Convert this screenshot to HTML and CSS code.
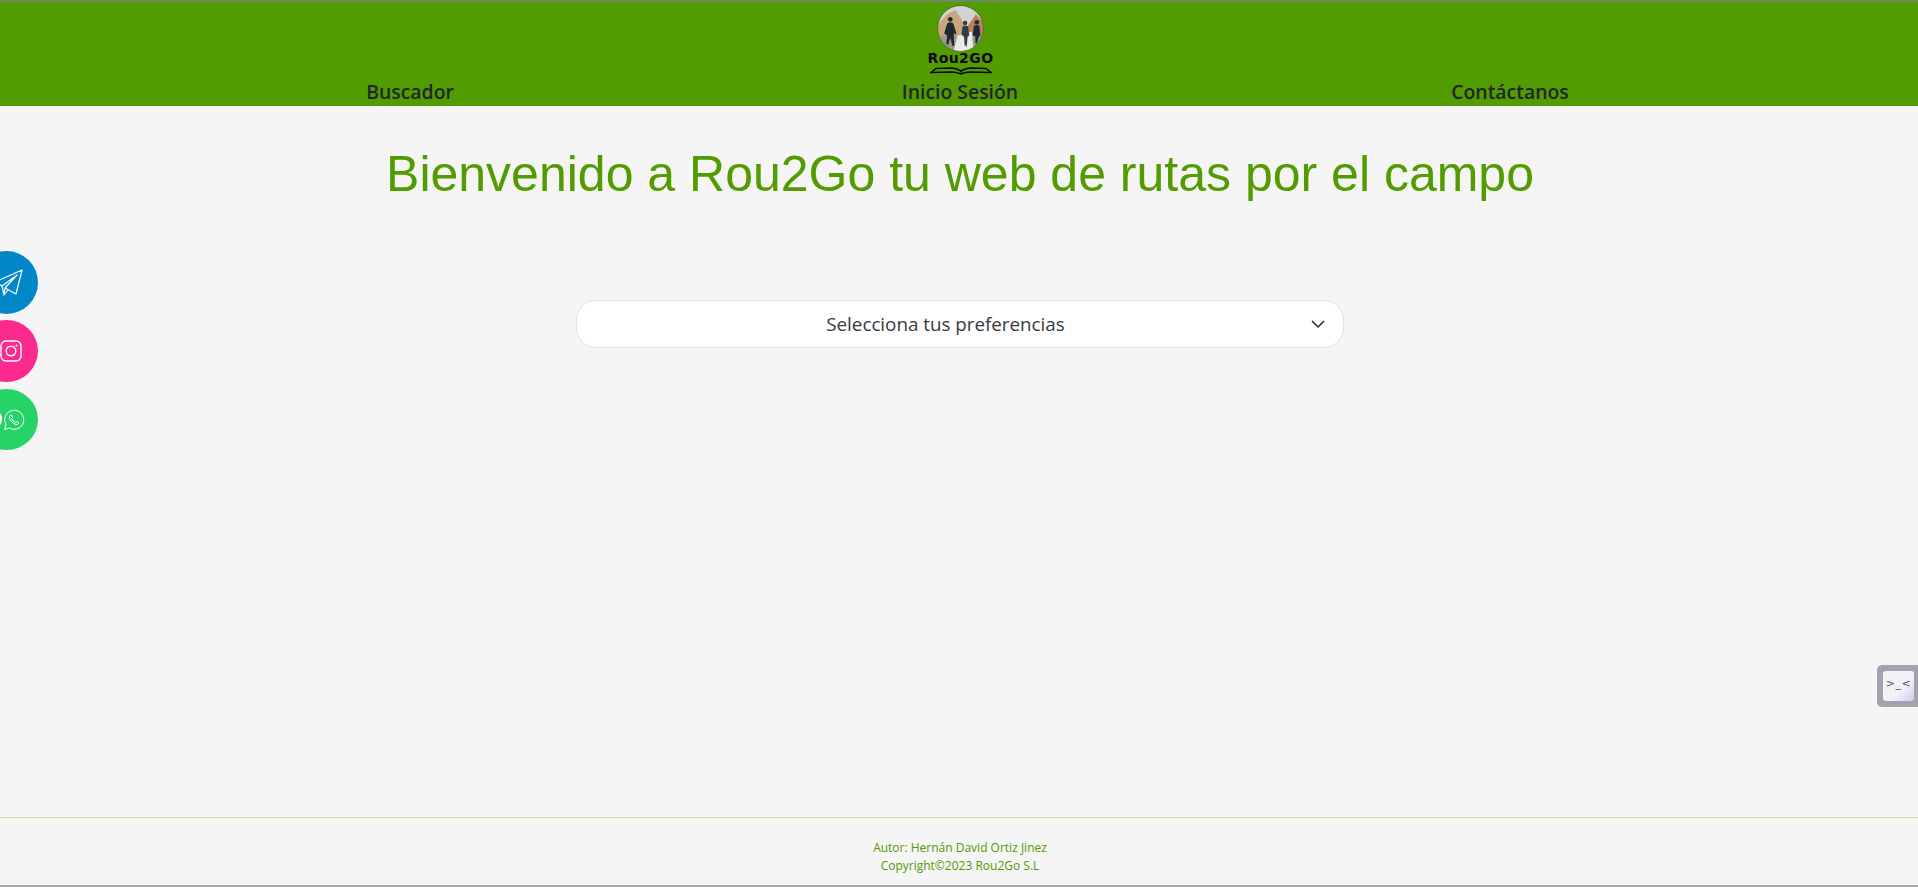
FILE: index.html
```html
<!DOCTYPE html>
<html lang="es">
<head>
    <meta charset="UTF-8">
    <meta name="viewport" content="width=device-width, initial-scale=1.0">
    <title>Rou2Go</title>
    <link rel="stylesheet" href="styles.css">
</head>
<body>
    <header class="cabecera">
        <div class="logo">
            <svg class="logo-foto" viewBox="0 0 46 46" width="47" height="47">
                <defs>
                    <clipPath id="recorte"><circle cx="23" cy="23" r="22.5"/></clipPath>
                </defs>
                <g clip-path="url(#recorte)">
                    <rect width="46" height="46" fill="#cfd3d2"/>
                    <path d="M0 20 L10 9 L18 5 L24 14 L28 22 V34 H0 Z" fill="#c8a67c"/>
                    <path d="M29 22 L38 9 L46 18 V34 H29 Z" fill="#bb7f60"/>
                    <path d="M0 30 H46 V46 H0 Z" fill="#9a9a8e"/>
                    <path d="M16 46 L20 30 L34 26 L36 46 Z" fill="#e9ebe9"/>
                    <circle cx="13" cy="14" r="2.3" fill="#20292d"/>
                    <path d="M10 18 Q13 16 16 18 L19 28 L17.5 29 L16.5 27 L16.5 33 L17 40 L15 40 L13 32 L11 39 L9 38 L10 30 L7 28 Z" fill="#20292d"/>
                    <circle cx="27.5" cy="17.5" r="2.2" fill="#2c4048"/>
                    <path d="M25 21 Q28 19 30.5 21 L31.5 30 L30 31 L29 41 L27 39 L26.5 31 L24 29 Z" fill="#2c4048"/>
                    <circle cx="39" cy="17" r="2.2" fill="#1d2a2f"/>
                    <path d="M36 20.5 Q39 18.5 41.5 20.5 L42.5 30 L41 31 L39 38 L37.5 37 L37.5 31 L35 29 Z" fill="#1d2a2f"/>
                </g>
                <circle cx="23" cy="23" r="22.5" fill="none" stroke="#3f6b1a" stroke-width="0.8"/>
            </svg>
            <span class="logo-texto">Rou2GO</span>
            <svg class="logo-libro" viewBox="0 0 62 9" width="62" height="9">
                <path d="M1 6.5 L6 2.5 L22 2 Q27 2.5 31 5 Q35 2.5 40 2 L56 2.5 L61 6.5 L41 6 Q35 6 31 8 Q27 6 21 6 Z" fill="none" stroke="#0a0a0a" stroke-width="1.5"/>
                <path d="M31 5 V8" stroke="#0a0a0a" stroke-width="1"/>
            </svg>
        </div>
        <nav class="menu">
            <a href="#">Buscador</a>
            <a href="#">Inicio Sesión</a>
            <a href="#">Contáctanos</a>
        </nav>
    </header>

    <main class="contenido">
        <h1 class="titulo">Bienvenido a Rou2Go tu web de rutas por el campo</h1>
        <div class="selector">
            <span>Selecciona tus preferencias</span>
            <svg class="flecha" viewBox="0 0 16 16" width="16" height="16">
                <path d="M2 5 L8 11 L14 5" fill="none" stroke="#212529" stroke-width="1.5"/>
            </svg>
        </div>
    </main>

    <footer class="pie">
        <p>Autor: Hernán David Ortiz Jinez</p>
        <p>Copyright©2023 Rou2Go S.L</p>
    </footer>

    <div class="redes">
        <a class="red telegram" href="#">
            <svg viewBox="0 0 30 30" width="30" height="30">
                <path d="M28 2 L1 14 L8 18 L23 7 L11 20 L22 26 Z M8 18 L10 27 L14 22 M11 20 L10 27" fill="none" stroke="#fff" stroke-width="1.2" stroke-linejoin="round"/>
            </svg>
        </a>
        <a class="red instagram" href="#">
            <svg viewBox="0 0 22 22" width="22" height="22">
                <rect x="1" y="1" width="20" height="20" rx="5" fill="none" stroke="#fff" stroke-width="1.4"/>
                <circle cx="11" cy="11" r="4.8" fill="none" stroke="#fff" stroke-width="1.4"/>
                <circle cx="16.6" cy="5.4" r="1" fill="#fff"/>
            </svg>
        </a>
        <a class="red whatsapp" href="#">
            <span class="mancha"></span>
            <svg viewBox="0 0 22 22" width="22" height="22">
                <path d="M1.5 20.5 L3 15.5 A9.5 9.5 0 1 1 6.5 19 Z" fill="none" stroke="#fff" stroke-width="1"/>
                <path d="M7.5 6 Q6 7 6.5 9.5 Q8 13.5 12.5 15.5 Q15 16 16 14 L13.8 12.6 L12.6 13.6 Q10 12.5 8.8 9.6 L9.7 8.4 L8.6 6 Z" fill="none" stroke="#fff" stroke-width="1"/>
            </svg>
        </a>
    </div>

    <div class="widget">
        <div class="widget-cara">&gt;_&lt;</div>
    </div>
</body>
</html>
```

FILE: styles.css
```css
*{
    box-sizing: border-box;
}
body{
    margin: 0;
    min-height: 887px;
    display: flex;
    flex-direction: column;
    background-color: #f5f5f5;
    font-family: "Open Sans", "Noto Sans", sans-serif;
    border-bottom: 2px solid #a9a9a9;
}

.cabecera{
    height: 106px;
    background-color: #529b00;
    border-top: 2px solid #6f8a5c;
    display: flex;
    flex-direction: column;
    align-items: center;
}
.logo{
    height: 75px;
    padding-top: 3px;
    margin-left: 3px;
    display: flex;
    flex-direction: column;
    align-items: center;
}
.logo-foto{
    display: block;
    flex: none;
}
.logo-texto{
    font-family: "DejaVu Sans", sans-serif;
    font-weight: bold;
    font-size: 14px;
    letter-spacing: 0.4px;
    line-height: 12px;
    color: #0a0a0a;
}
.logo-libro{
    display: block;
    flex: none;
    margin-top: 2px;
}
.menu{
    display: grid;
    grid-template-columns: repeat(3, 550px);
    justify-content: center;
    margin-left: 2px;
    text-align: center;
}
.menu > a{
    color: #212529;
    font-size: 19.4px;
    font-weight: 600;
    line-height: 29px;
    text-decoration: none;
}

.contenido{
    flex: 1;
    display: flex;
    flex-direction: column;
    align-items: center;
}
.titulo{
    margin: 38px 0 0 2px;
    font-family: "Liberation Sans", sans-serif;
    font-size: 50px;
    font-weight: normal;
    line-height: 60px;
    color: #529b00;
}
.selector{
    width: 768px;
    height: 48px;
    margin-top: 96px;
    margin-left: 2px;
    padding: 0 17px 0 4px;
    background-color: #fff;
    border: 1px solid #dee2e6;
    border-radius: 20px;
    display: flex;
    align-items: center;
    color: #343a40;
    font-size: 18.8px;
}
.selector > span{
    flex: 1;
    text-align: center;
}
.flecha{
    flex: none;
}

.pie{
    height: 68px;
    padding-top: 21px;
    padding-left: 2px;
    border-top: 1px solid #c6e0ae;
    text-align: center;
    color: #529b00;
    font-size: 12px;
    line-height: 18px;
}
.pie > p{
    margin: 0;
}

.redes{
    position: fixed;
    left: -25px;
    top: 251px;
    display: flex;
    flex-direction: column;
    gap: 6px;
}
.red{
    position: relative;
    width: 63px;
    height: 63px;
    border-radius: 50%;
    display: flex;
    align-items: center;
    justify-content: center;
}
.telegram{
    background-color: #0086c9;
    padding-left: 4px;
}
.instagram{
    background-color: #fb2a8c;
    height: 62px;
    padding-left: 9px;
}
.whatsapp{
    background-color: #25d366;
    height: 61px;
    margin-top: 1px;
    padding-left: 15px;
}
.mancha{
    position: absolute;
    left: 22px;
    top: 24px;
    width: 5px;
    height: 12px;
    border-radius: 50%;
    background-color: #fff;
}

.widget{
    position: fixed;
    right: 0;
    top: 665px;
    width: 41px;
    height: 42px;
    padding: 6px 4px 6px 6px;
    background-color: #a3a3ad;
    border-radius: 5px 0 0 5px;
}
.widget-cara{
    height: 30px;
    border-radius: 3px;
    background: linear-gradient(135deg, #f2f2f6 60%, #d9c4f0);
    color: #555;
    font-family: "DejaVu Sans", sans-serif;
    font-size: 11px;
    letter-spacing: 0.5px;
    line-height: 26px;
    text-align: center;
}
```
